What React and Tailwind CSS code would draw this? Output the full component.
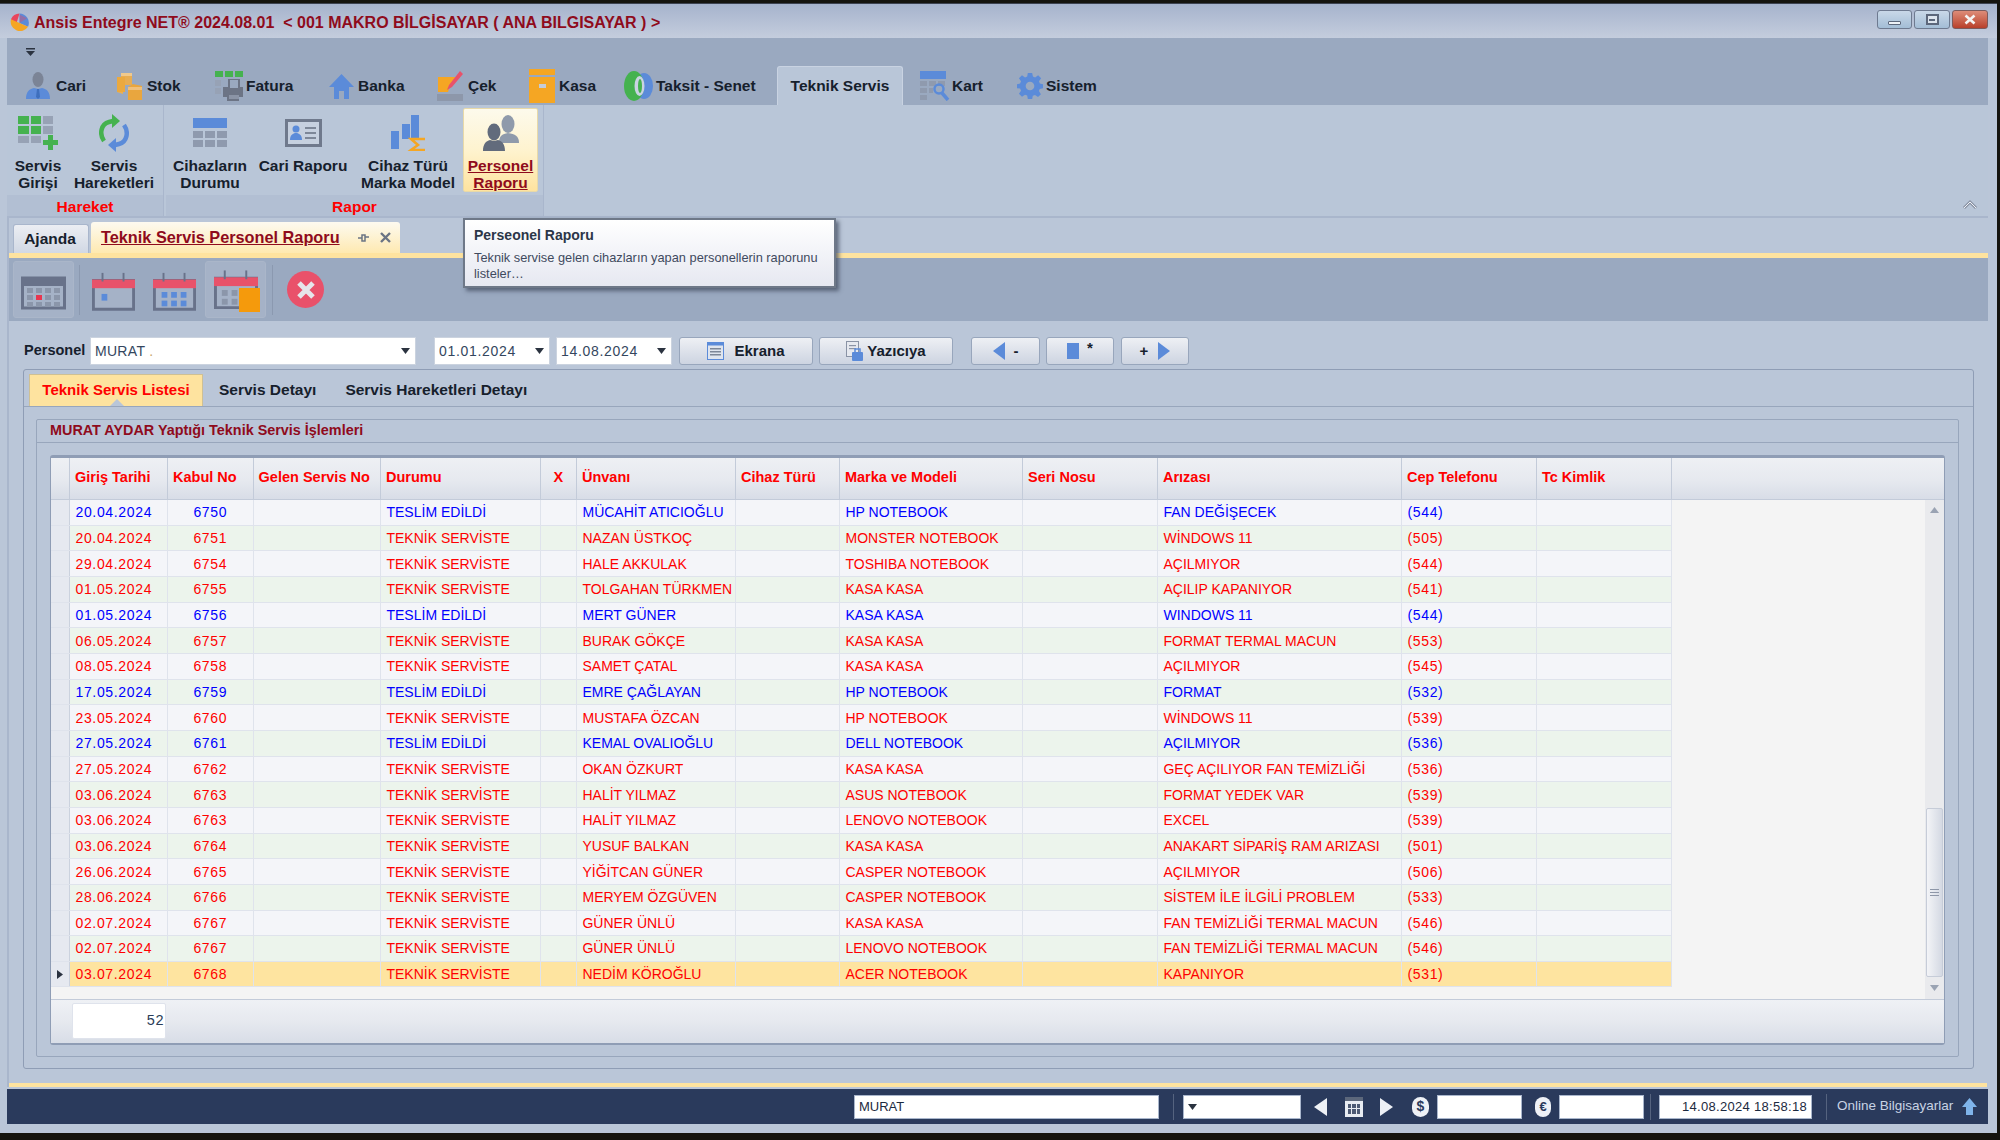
import React from "react";

const COLS = "grid-cols-[19px_98px_85.6px_127.4px_159.6px_36.4px_159px_104px_183px_135px_244px_135px_135px]";
const HEAD_COLS = "grid-cols-[19px_98px_85.6px_127.4px_159.6px_36.4px_159px_104px_183px_135px_244px_135px_135px_1fr]";

const T = "TEKNİK SERVİSTE", E = "TESLİM EDİLDİ";
const rows = [
  ["20.04.2024","6750",E,"MÜCAHİT ATICIOĞLU","HP NOTEBOOK","FAN DEĞİŞECEK","(544)",1],
  ["20.04.2024","6751",T,"NAZAN ÜSTKOÇ","MONSTER NOTEBOOK","WİNDOWS 11","(505)",0],
  ["29.04.2024","6754",T,"HALE AKKULAK","TOSHIBA NOTEBOOK","AÇILMIYOR","(544)",0],
  ["01.05.2024","6755",T,"TOLGAHAN TÜRKMEN","KASA KASA","AÇILIP KAPANIYOR","(541)",0],
  ["01.05.2024","6756",E,"MERT GÜNER","KASA KASA","WINDOWS 11","(544)",1],
  ["06.05.2024","6757",T,"BURAK GÖKÇE","KASA KASA","FORMAT TERMAL MACUN","(553)",0],
  ["08.05.2024","6758",T,"SAMET ÇATAL","KASA KASA","AÇILMIYOR","(545)",0],
  ["17.05.2024","6759",E,"EMRE ÇAĞLAYAN","HP NOTEBOOK","FORMAT","(532)",1],
  ["23.05.2024","6760",T,"MUSTAFA ÖZCAN","HP NOTEBOOK","WİNDOWS 11","(539)",0],
  ["27.05.2024","6761",E,"KEMAL OVALIOĞLU","DELL NOTEBOOK","AÇILMIYOR","(536)",1],
  ["27.05.2024","6762",T,"OKAN ÖZKURT","KASA KASA","GEÇ AÇILIYOR FAN TEMİZLİĞİ","(536)",0],
  ["03.06.2024","6763",T,"HALİT YILMAZ","ASUS NOTEBOOK","FORMAT YEDEK VAR","(539)",0],
  ["03.06.2024","6763",T,"HALİT YILMAZ","LENOVO NOTEBOOK","EXCEL","(539)",0],
  ["03.06.2024","6764",T,"YUSUF BALKAN","KASA KASA","ANAKART SİPARİŞ RAM ARIZASI","(501)",0],
  ["26.06.2024","6765",T,"YİĞİTCAN GÜNER","CASPER NOTEBOOK","AÇILMIYOR","(506)",0],
  ["28.06.2024","6766",T,"MERYEM ÖZGÜVEN","CASPER NOTEBOOK","SİSTEM İLE İLGİLİ PROBLEM","(533)",0],
  ["02.07.2024","6767",T,"GÜNER ÜNLÜ","KASA KASA","FAN TEMİZLİĞİ TERMAL MACUN","(546)",0],
  ["02.07.2024","6767",T,"GÜNER ÜNLÜ","LENOVO NOTEBOOK","FAN TEMİZLİĞİ TERMAL MACUN","(546)",0],
  ["03.07.2024","6768",T,"NEDİM KÖROĞLU","ACER NOTEBOOK","KAPANIYOR","(531)",0],
];

const BLUE = "#5b8bd9", GREEN = "#45b24f", ORANGE = "#f5a623";

const Cari = () => (
  <svg width="24" height="27" viewBox="0 0 24 27"><ellipse cx="12" cy="7.5" rx="5.5" ry="7.5" fill="#7b8496" /><path d="M0 27c0-7 3-10 8-11l4 1 4-1c5 1 8 4 8 11z" fill={BLUE} /><path d="M11 17h2l1 8-2 2-2-2z" fill="#3e6fbd" /></svg>
);
const Stok = () => (
  <svg width="27" height="28" viewBox="0 0 27 28"><path d="M1 8l6-2v16l-6-2z" fill="#eeb04e" /><rect x="5" y="1" width="11" height="12" fill="#e8ad52" /><rect x="5" y="1" width="11" height="3" fill="#f0c98c" /><path d="M12 15l5-3 9 2v14H12z" fill="#e9a63e" /><path d="M12 15h14v3H12z" fill="#f0c07a" /><rect x="1" y="5" width="8" height="15" fill="#eba93f" /></svg>
);
const Fatura = () => (
  <svg width="30" height="30" viewBox="0 0 30 30">
    <rect x="0" y="0" width="8" height="6" fill={GREEN} /><rect x="10" y="0" width="8" height="6" fill={GREEN} /><rect x="20" y="0" width="8" height="6" fill={GREEN} />
    <rect x="0" y="9" width="6" height="6" fill="#97a2b5" /><rect x="0" y="17" width="6" height="6" fill="#97a2b5" /><rect x="8" y="17" width="5" height="6" fill="#97a2b5" />
    <path d="M13 8h12v8h3v10h-4v4H12v-4H8V16h5z" fill="#6c7485" /><rect x="15" y="9" width="8" height="8" fill="#9aa9c0" /><rect x="14" y="24" width="10" height="4" fill="#8b94a6" />
  </svg>
);
const Banka = () => (
  <svg width="25" height="26" viewBox="0 0 25 26"><path d="M12.5 1L25 14h-5v12h-5v-8h-5v8H5V14H0z" fill={BLUE} /></svg>
);
const Cek = () => (
  <svg width="27" height="30" viewBox="0 0 27 30"><path d="M1 6h18l-7 12-1 3H1z" fill={ORANGE} /><path d="M23 0l3 3-11 13-5 3 2-5z" fill="#e8526a" /><rect x="0" y="23" width="26" height="7" fill="#8d97aa" /></svg>
);
const Kasa = () => (
  <svg width="26" height="34" viewBox="0 0 26 34"><rect x="0" y="0" width="26" height="6" fill={ORANGE} /><rect x="0" y="8" width="26" height="26" fill={ORANGE} /><rect x="10" y="15" width="7" height="4" fill="#c5ccd8" /></svg>
);
const Taksit = () => (
  <svg width="29" height="30" viewBox="0 0 29 30"><ellipse cx="20" cy="15" rx="9" ry="13" fill={BLUE} /><ellipse cx="10" cy="15" rx="10" ry="15" fill={GREEN} /><ellipse cx="15.500" cy="15" rx="5" ry="10" fill="#c9d3e2" /><ellipse cx="16" cy="15" rx="2" ry="7" fill={GREEN} /></svg>
);
const Kart = () => (
  <svg width="30" height="30" viewBox="0 0 30 30"><rect x="0" y="0" width="26" height="8" fill={BLUE} /><g fill="#8f9aae"><rect x="0" y="10" width="7" height="5" /><rect x="9" y="10" width="7" height="5" /><rect x="18" y="10" width="7" height="5" /><rect x="0" y="17" width="7" height="5" /><rect x="9" y="17" width="4" height="5" /><rect x="0" y="24" width="7" height="5" /></g><circle cx="19" cy="18" r="4.500" fill="none" stroke={BLUE} strokeWidth="2.500" /><path d="M22 22l6 7" stroke={BLUE} strokeWidth="3.500" /></svg>
);
const Sistem = () => (
  <svg width="26" height="28" viewBox="0 0 24 24" fill={BLUE}><path fillRule="evenodd" d="M10 0h4l.7 3.3 2 .8L19.5 2 22.300 4.800l-2 2.900.8 1.900L24 10.300v3.700l-3 .7-.8 2 1.900 2.800-2.700 2.700-2.800-1.900-2 .8L14 24h-4l-.6-3.200-2-.8-2.800 1.900-2.800-2.700 1.900-2.800-.8-2L0 14v-3.700l2.900-.7.800-1.900-1.900-2.900L4.600 2l2.800 2.100 2-.8zM12 8a4 4 0 100 8 4 4 0 000-8z" /></svg>
);

const ribbonTabs = [
  { w: "w-[90px]", c: <Cari />, t: "Cari", g: "gap-[6px]" },
  { w: "w-[99px]", c: <Stok />, t: "Stok", g: "gap-[4px]" },
  { w: "w-[114px]", c: <Fatura />, t: "Fatura", g: "gap-[1px]" },
  { w: "w-[108px]", c: <Banka />, t: "Banka", g: "gap-[4px]" },
  { w: "w-[92px]", c: <Cek />, t: "Çek", g: "gap-[4px]" },
  { w: "w-[95px]", c: <Kasa />, t: "Kasa", g: "gap-[4px]" },
  { w: "w-[153px]", c: <Taksit />, t: "Taksit - Senet", g: "gap-[3px]" },
];

const ServisGirisi = () => (
  <svg width="40" height="34" viewBox="0 0 40 34">
    <g fill={GREEN}><rect x="0" y="0" width="11" height="8" /><rect x="13" y="0" width="10" height="8" /><rect x="0" y="10" width="11" height="8" /><rect x="13" y="10" width="10" height="8" /></g>
    <g fill="#97a2b5"><rect x="25" y="0" width="10" height="8" /><rect x="25" y="10" width="10" height="8" /><rect x="0" y="20" width="11" height="7" /><rect x="13" y="20" width="10" height="7" /></g>
    <path d="M30 19h5v5h5v5h-5v5h-5v-5h-5v-5h5z" fill={GREEN} />
  </svg>
);
const ServisHareket = () => (
  <svg width="30" height="38" viewBox="0 0 30 38">
    <path d="M5 27C0 20 2 10 10 8l4-1" fill="none" stroke={GREEN} strokeWidth="4.500" />
    <path d="M13 0l8 7-8 7z" fill={GREEN} />
    <path d="M25 11c5 7 3 17-5 19l-4 1" fill="none" stroke={BLUE} strokeWidth="4.500" />
    <path d="M17 38l-8-7 8-7z" fill={BLUE} />
  </svg>
);
const Durumu = () => (
  <svg width="34" height="30" viewBox="0 0 34 30">
    <rect x="0" y="0" width="34" height="10" fill={BLUE} />
    <g fill="#8f9aae"><rect x="0" y="13" width="10" height="7" /><rect x="12" y="13" width="10" height="7" /><rect x="24" y="13" width="10" height="7" /><rect x="0" y="22" width="10" height="7" /><rect x="12" y="22" width="10" height="7" /><rect x="24" y="22" width="10" height="7" /></g>
  </svg>
);
const CariRapor = () => (
  <svg width="37" height="28" viewBox="0 0 37 28">
    <rect x="1.500" y="1.500" width="34" height="25" fill="#c6d0df" stroke="#6f798c" strokeWidth="3" />
    <circle cx="11" cy="10" r="3.500" fill={BLUE} /><path d="M5 21c0-5 3-7 6-7s6 2 6 7z" fill={BLUE} />
    <g fill="#7d8798"><rect x="20" y="8" width="11" height="2" /><rect x="20" y="13" width="11" height="2" /><rect x="20" y="18" width="11" height="2" /></g>
  </svg>
);
const CihazTuru = () => (
  <svg width="35" height="36" viewBox="0 0 35 36">
    <rect x="0" y="16" width="8" height="18" fill={BLUE} /><rect x="11" y="9" width="8" height="15" fill={BLUE} /><rect x="20" y="0" width="8" height="24" fill={BLUE} />
    <path d="M34 24H20l7 6-7 5h14" fill="none" stroke={ORANGE} strokeWidth="2.500" />
  </svg>
);
const Persons = () => (
  <svg width="36" height="36" viewBox="0 0 36 36">
    <ellipse cx="25" cy="9" rx="6.500" ry="9" fill="#8f9aab" /><path d="M16 28c0-7 3-9 9-10 7 1 11 3 11 10z" fill="#8f9aab" />
    <ellipse cx="11" cy="17" rx="6.500" ry="8.500" fill="#626b7c" /><path d="M0 36c0-7 3-10 7-11l4 1 4-1c4 1 7 4 7 11z" fill="#626b7c" />
  </svg>
);

const RibbonBtn = ({ w, ml, icon, l1, l2, active }) => (
  <div className={`${w} ${ml} h-[84px] mt-[3px] flex flex-col items-center shrink-0 rounded-[2px] ${active ? "bg-gradient-to-b from-[#fdfaec] via-[#fef3cf] to-[#fee39f] border border-[#e8d9a8]" : ""}`}>
    <div className="h-[46px] pt-[3px] flex items-center justify-center">{icon}</div>
    <div className="mt-[3px] text-center text-[15.500px] leading-[17px] font-bold whitespace-nowrap">
      <div className={active ? "text-[#8f0b1c] underline" : "text-[#16202c]"}>{l1}</div>
      {l2 && <div className={active ? "text-[#8f0b1c] underline" : "text-[#16202c]"}>{l2}</div>}
    </div>
  </div>
);

const Group = ({ w, label, children }) => (
  <div className={`${w} flex flex-col h-full border-r border-[#a9b6cc] shrink-0`}>
    <div className="flex h-[90px]">{children}</div>
    <div className="h-[21px] pt-[2px] bg-[#b2bfd3] text-center text-[15.500px] leading-[19px] font-bold text-[#ff0000]">{label}</div>
  </div>
);

const Cal = ({ w, h, red, children }) => (
  <svg width={w} height={h} viewBox="0 0 45 40">
    <path d="M1.500 8h42v30h-42z" fill="#a5b2c7" stroke="#68728a" strokeWidth="3" />
    <rect x="0" y="7" width="45" height="9" fill={red ? "#e8526a" : "#68728a"} />
    {red && <><rect x="10" y="0" width="2" height="9" fill="#68728a" /><rect x="32" y="0" width="2" height="9" fill="#68728a" /></>}
    {children}
  </svg>
);

const Grid4 = () => {
  const cells = [];
  for (let r = 0; r < 3; r++) for (let c = 0; c < 4; c++) {
    cells.push(<rect key={`${r}${c}`} x={6 + c * 9} y={18 + r * 7} width="6" height="5" fill={r === 1 && c === 1 ? "#e8364f" : "#8b96aa"} />);
  }
  return <>{cells}</>;
};

const Arrow = ({ c = "text-[#2b3340]" }) => (
  <svg width="9" height="6" viewBox="0 0 9 6" className={c}><path d="M0 0h9L4.500 6z" fill="currentColor" /></svg>
);

const Btn = ({ w, ml, children }) => (
  <div className={`${w} ${ml} h-[28px] flex items-center justify-center rounded-[3px] border border-[#98a6bc] bg-gradient-to-b from-[#eef0f4] to-[#cdd4e1] font-bold text-[15px] text-[#16202c]`}>{children}</div>
);

const Input = ({ w, ml, children, cls = "" }) => (
  <div className={`${w} ${ml} h-[28px] bg-white border border-[#cbd3df] flex items-center justify-between pl-[4px] pr-[5px] text-[14px] text-[#34465e] ${cls}`}>{children}</div>
);

const StatusInput = ({ w, ml, right, children }) => (
  <div className={`${w} ${ml} h-[24px] bg-white border border-[#a9b6cc] flex items-center text-[13px] text-[#1c2a40] px-[4px] ${right ? "justify-end tracking-[0.3px]" : ""}`}>{children}</div>
);

const Cell = ({ children, center, mono, color }) => (
  <div className={`h-full border-r border-[#dfe3ec] flex items-center overflow-hidden whitespace-nowrap ${center ? "justify-center" : "pl-[5.500px]"} ${mono ? "tracking-[0.65px]" : ""} ${color}`}>{children}</div>
);

const HeadCell = ({ children, center }) => (
  <div className={`h-full border-r border-[#c3cbd9] flex items-center whitespace-nowrap pb-[2px] text-[14.500px] font-bold text-[#ff0000] ${center ? "justify-center" : "pl-[5px]"}`}>{children}</div>
);

export default function App() {
  return (
    <div className="w-[2000px] h-[1140px] bg-[#15140f] overflow-hidden pt-[3px] font-['Liberation_Sans',Arial,sans-serif]">
      <div className="w-[1997px] h-[1130px] bg-[#bac6d8] border-t border-[#3c4250] relative flex flex-col">
        {/* Title bar */}
        <div className="h-[34px] shrink-0 bg-gradient-to-b from-[#a6b3cc] to-[#c4cddd] flex items-center pl-[10px] pt-[3px]">
          <svg width="19" height="20" viewBox="0 0 20 20" className="shrink-0">
            <path d="M10 0a10 10 0 00-9 6l5 7z" fill="#e9455c" />
            <path d="M10 0a10 10 0 019 14l-9-4z" fill="#5b8bd9" />
            <path d="M1 6a10 10 0 0018 8l-9-4z" fill="#f5a623" />
            <path d="M10 1l8 4-8 5z" fill="#e9455c" opacity="0.4" />
          </svg>
          <span className="ml-[5px] text-[16px] font-bold text-[#8f0b1c] whitespace-pre">{"Ansis Entegre NET® 2024.08.01  < 001 MAKRO BİLGİSAYAR ( ANA BILGISAYAR ) >"}</span>
          <div className="ml-auto mr-[9px] flex gap-[2px] mt-[-6px]">
            <div className="w-[35px] h-[19px] rounded-[3px] border border-[#6e7a90] bg-gradient-to-b from-[#c9d8e8] to-[#a3bdd6] flex items-end justify-center pb-[3px]"><div className="w-[13px] h-[4px] bg-[#eef2f7] border border-[#5c677b] rounded-[1px]" /></div>
            <div className="w-[36px] h-[19px] rounded-[3px] border border-[#6e7a90] bg-gradient-to-b from-[#c9d8e8] to-[#a3bdd6] flex items-center justify-center"><div className="w-[13px] h-[11px] bg-[#dde5ee] border-2 border-[#5c677b] flex items-center justify-center"><div className="w-[6px] h-[2px] bg-[#5c677b]" /></div></div>
            <div className="w-[36px] h-[19px] rounded-[3px] border border-[#7c5b5c] bg-gradient-to-b from-[#dd8c78] to-[#b83f2a] flex items-center justify-center">
              <svg width="12" height="11" viewBox="0 0 12 11"><path d="M1.500 1.500l9 8M10.500 1.500l-9 8" stroke="#f4f4f4" strokeWidth="2.600" /></svg>
            </div>
          </div>
        </div>

        {/* Main column */}
        <div className="flex-1 ml-[7px] mr-[9px] flex flex-col min-h-0">
          {/* Ribbon tab strip */}
          <div className="h-[67px] shrink-0 bg-[#9aa9c0] flex flex-col">
            <div className="h-[28px] pl-[19px] pt-[10px]"><svg width="9" height="8" viewBox="0 0 9 8"><rect x="0" y="0" width="9" height="1.500" fill="#2b3340" /><path d="M0 3h9L4.500 8z" fill="#2b3340" /></svg></div>
            <div className="flex h-[39px] pl-[19px] text-[15.500px] font-bold text-[#16202c] whitespace-nowrap">
              {ribbonTabs.map((t) => (
                <div key={t.t} className={`${t.w} flex items-center shrink-0 ${t.g}`}>{t.c}<span>{t.t}</span></div>
              ))}
              <div className="w-[126px] h-[39px] shrink-0 bg-[#b9c6d8] rounded-t-[3px] border-t border-x border-[#c9d3e2] flex items-center justify-center">Teknik Servis</div>
              <div className="w-[97px] ml-[17px] flex items-center shrink-0 gap-[2px]"><Kart /><span>Kart</span></div>
              <div className="flex items-center gap-[3px]"><Sistem /><span>Sistem</span></div>
            </div>
          </div>

          {/* Ribbon panel */}
          <div className="h-[113px] shrink-0 bg-[#b9c6d8] flex border-b-2 border-[#a9b6cc]">
            <Group w="w-[157px]" label="Hareket">
              <RibbonBtn w="w-[58px]" ml="ml-[2px]" icon={<ServisGirisi />} l1="Servis" l2="Girişi" />
              <RibbonBtn w="w-[94px]" ml="" icon={<ServisHareket />} l1="Servis" l2="Hareketleri" />
            </Group>
            <Group w="w-[378px] ml-[2px]" label="Rapor">
              <RibbonBtn w="w-[78px]" ml="ml-[5px]" icon={<Durumu />} l1="Cihazların" l2="Durumu" />
              <RibbonBtn w="w-[88px]" ml="ml-[10px]" icon={<CariRapor />} l1="Cari Raporu" />
              <RibbonBtn w="w-[104px]" ml="ml-[9px]" icon={<CihazTuru />} l1="Cihaz Türü" l2="Marka Model" />
              <RibbonBtn w="w-[75px]" ml="ml-[3px]" icon={<Persons />} l1="Personel" l2="Raporu" active />
            </Group>
            <div className="flex-1 flex justify-end items-end pr-[10px] pb-[5px]">
              <svg width="16" height="12" viewBox="0 0 16 12"><path d="M2 9l6-6 6 6" fill="none" stroke="#8a93a5" strokeWidth="3" /><path d="M2 9l6-6 6 6" fill="none" stroke="#eef1f6" strokeWidth="1" /></svg>
            </div>
          </div>

          {/* Document area */}
          <div className="flex-1 min-h-0 flex flex-col border-l-2 border-[#a9b6cc]">
            <div className="h-[35px] shrink-0 flex items-end pl-[4px] gap-[2px]">
              <div className="w-[76px] h-[29px] rounded-t-[3px] border border-b-0 border-[#a9b6cc] bg-gradient-to-b from-[#eceef3] to-[#d1d8e4] flex items-center justify-center text-[15.500px] font-bold text-[#16202c] pr-[2px]">Ajanda</div>
              <div className="w-[309px] h-[31px] rounded-t-[3px] bg-gradient-to-b from-[#fdfaf0] to-[#fee9b0] flex items-center pl-[10px] text-[16.300px] font-bold text-[#8f0b1c] whitespace-nowrap">
                <span className="underline">Teknik Servis Personel Raporu</span>
                <svg width="11" height="10" viewBox="0 0 11 10" className="ml-[18px]"><path d="M0 5h4M4 2h3v6H4zM7 4h4" fill="none" stroke="#6b7484" strokeWidth="1.500" /></svg>
                <svg width="11" height="11" viewBox="0 0 11 11" className="ml-[11px]"><path d="M1 1l9 9M10 1l-9 9" stroke="#6b7484" strokeWidth="2.400" /></svg>
              </div>
            </div>
            <div className="h-[5px] shrink-0 bg-[#fee39f]" />
            {/* Toolbar */}
            <div className="h-[63px] shrink-0 bg-[#9aa9c0] flex items-center pl-[4px]">
              <div className="w-[61px] h-[57px] rounded-[3px] border border-[#aab6c9] bg-[#a5b2c7] flex items-center justify-center"><Cal w={45} h={40}><Grid4 /></Cal></div>
              <div className="w-px h-[50px] bg-[#8b99b0] ml-[5px]" />
              <div className="ml-[12px] mt-[4px]"><Cal w={43} h={42} red><rect x="10" y="22" width="6" height="7" fill="#5b8bd9" /></Cal></div>
              <div className="ml-[18px] mt-[4px]"><Cal w={43} h={42} red><g fill="#5b8bd9"><rect x="9" y="20" width="6" height="6" /><rect x="19" y="20" width="6" height="6" /><rect x="29" y="20" width="6" height="6" /><rect x="9" y="29" width="6" height="6" /><rect x="19" y="29" width="6" height="6" /><rect x="29" y="29" width="6" height="6" /></g></Cal></div>
              <div className="ml-[9px] w-[61px] h-[57px] rounded-[3px] border border-[#aab6c9] bg-[#a5b2c7] flex items-center justify-center relative">
                <Cal w={44} h={44} red><g fill="#8b96aa"><rect x="8" y="20" width="6" height="6" /><rect x="18" y="20" width="6" height="6" /><rect x="28" y="20" width="6" height="6" /><rect x="8" y="29" width="6" height="6" /><rect x="18" y="29" width="6" height="6" /></g></Cal>
                <div className="absolute right-[5px] bottom-[5px] w-[21px] h-[24px] bg-[#f59a0c]" />
              </div>
              <div className="w-px h-[50px] bg-[#8b99b0] ml-[6px]" />
              <div className="ml-[14px] w-[37px] h-[37px] rounded-full bg-[#e9516a] flex items-center justify-center">
                <svg width="22" height="22" viewBox="0 0 22 22"><path d="M4 4l14 14M18 4L4 18" stroke="#e6e6ea" strokeWidth="5" /></svg>
              </div>
            </div>

            {/* Content */}
            <div className="flex-1 min-h-0 flex flex-col">
              <div className="h-[48px] shrink-0 pt-[16px] pl-[15px] flex items-start">
                <div className="w-[66px] h-[28px] flex items-center text-[14.500px] font-bold text-[#16202c]">Personel</div>
                <Input w="w-[326px]" ml="" cls="tracking-[0.3px]"><span>MURAT <span className="text-[#c9a46a]">.</span></span><Arrow /></Input>
                <Input w="w-[116px]" ml="ml-[18px]" cls="tracking-[0.7px]"><span>01.01.2024</span><Arrow /></Input>
                <Input w="w-[116px]" ml="ml-[6px]" cls="tracking-[0.7px]"><span>14.08.2024</span><Arrow /></Input>
                <Btn w="w-[134px]" ml="ml-[7px]">
                  <svg width="17" height="18" viewBox="0 0 17 18" className="mr-[10px]"><rect x="0.500" y="0.500" width="16" height="17" fill="#dfe5ee" stroke="#5b8bd9" /><rect x="0.500" y="0.500" width="16" height="3" fill="#5b8bd9" /><g fill="#7d8798"><rect x="3" y="6" width="11" height="1.500" /><rect x="3" y="9" width="11" height="1.500" /><rect x="3" y="12" width="11" height="1.500" /></g></svg>
                  Ekrana
                </Btn>
                <Btn w="w-[134px]" ml="ml-[6px]">
                  <svg width="17" height="20" viewBox="0 0 17 20" className="mr-[4px]"><rect x="0.500" y="0.500" width="12" height="15" fill="#e6e9ef" stroke="#8a93a5" /><g fill="#8a93a5"><rect x="3" y="4" width="7" height="1.200" /><rect x="3" y="7" width="7" height="1.200" /></g><rect x="6" y="11" width="11" height="9" rx="1" fill="#5b8bd9" /><rect x="9" y="8" width="5" height="4" fill="none" stroke="#5b8bd9" strokeWidth="1.500" /></svg>
                  Yazıcıya
                </Btn>
                <Btn w="w-[69px]" ml="ml-[18px]"><svg width="12" height="18" viewBox="0 0 12 18" className="mr-[9px]"><path d="M12 0v18L0 9z" fill="#5b8bd9" /></svg>-</Btn>
                <Btn w="w-[68px]" ml="ml-[6px]"><div className="w-[12px] h-[16px] bg-[#5b8bd9] mr-[8px]" /><span className="mb-[5px]">*</span></Btn>
                <Btn w="w-[68px]" ml="ml-[7px]">+<svg width="12" height="18" viewBox="0 0 12 18" className="ml-[10px]"><path d="M0 0v18l12-9z" fill="#5b8bd9" /></svg></Btn>
              </div>

              {/* Tab panel */}
              <div className="h-[700px] shrink-0 ml-[14px] mr-[14px] rounded-[3px] border border-[#8f9db5] flex flex-col">
                <div className="h-[37px] shrink-0 flex items-end pl-[5px] border-b border-[#98a6bc] text-[15.500px] font-bold text-[#16202c] whitespace-nowrap">
                  <div className="w-[174px] h-[32px] relative bg-[#fee39f] border border-b-0 border-[#cfc094] flex items-center justify-center text-[15px] text-[#ff0000]">
                    Teknik Servis Listesi
                    <div className="absolute left-[80px] bottom-0 w-0 h-0 border-x-[7px] border-x-transparent border-b-[7px] border-b-[#b9c6d8]" />
                  </div>
                  <div className="h-[32px] flex items-center ml-[16px]">Servis Detayı</div>
                  <div className="h-[32px] flex items-center ml-[29px]">Servis Hareketleri Detayı</div>
                </div>
                {/* Group panel */}
                <div className="mt-[12px] ml-[12px] mr-[14px] h-[638px] rounded-[2px] border border-[#98a6bc] flex flex-col">
                  <div className="h-[23px] shrink-0 border-b border-[#98a6bc] flex items-center pl-[13px] text-[14.400px] font-bold text-[#8f0b1c]">MURAT AYDAR Yaptığı Teknik Servis İşlemleri</div>
                  {/* Data grid */}
                  <div className="mt-[12px] mx-[13px] h-[590px] rounded-[3px] border-x border-b-2 border-t-[3px] border-[#8f9db5] flex flex-col bg-[#f4f4f4]">
                    <div className={`h-[42px] shrink-0 grid ${HEAD_COLS} bg-gradient-to-b from-[#eef0f4] via-[#e6e9ef] via-55% to-[#d8dde7] border-b border-[#c3cbd9]`}>
                      <HeadCell />
                      <HeadCell>Giriş Tarihi</HeadCell>
                      <HeadCell>Kabul No</HeadCell>
                      <HeadCell>Gelen Servis No</HeadCell>
                      <HeadCell>Durumu</HeadCell>
                      <HeadCell center>X</HeadCell>
                      <HeadCell>Ünvanı</HeadCell>
                      <HeadCell>Cihaz Türü</HeadCell>
                      <HeadCell>Marka ve Modeli</HeadCell>
                      <HeadCell>Seri Nosu</HeadCell>
                      <HeadCell>Arızası</HeadCell>
                      <HeadCell>Cep Telefonu</HeadCell>
                      <HeadCell>Tc Kimlik</HeadCell>
                      <div />
                    </div>
                    <div className="h-[499px] shrink-0 flex">
                      <div className="flex-1 min-w-0">
                        {rows.map((r, i) => {
                          const sel = i === rows.length - 1;
                          const bg = sel ? "bg-[#fee4a0]" : i % 2 === 0 ? "bg-[#f4f5f9]" : "bg-[#ecf4ec]";
                          const c = r[7] ? "text-[#0000ff]" : "text-[#ff0000]";
                          return (
                            <div key={i} className={`h-[25.670px] grid ${COLS} w-[1621px] ${bg} border-b border-[#dfe3ec] text-[14px] leading-none`}>
                              <div className="h-full bg-[#e6e9f0] border-r border-[#cbd2de] flex items-center justify-center">
                                {sel && <svg width="6" height="9" viewBox="0 0 6 9"><path d="M0 0v9l6-4.500z" fill="#2b3340" /></svg>}
                              </div>
                              <Cell mono color={c}>{r[0]}</Cell>
                              <Cell mono center color={c}>{r[1]}</Cell>
                              <Cell color={c} />
                              <Cell color={c}>{r[2]}</Cell>
                              <Cell color={c} />
                              <Cell color={c}>{r[3]}</Cell>
                              <Cell color={c} />
                              <Cell color={c}>{r[4]}</Cell>
                              <Cell color={c} />
                              <Cell color={c}>{r[5]}</Cell>
                              <Cell mono color={c}>{r[6]}</Cell>
                              <Cell color={c} />
                            </div>
                          );
                        })}
                      </div>
                      {/* Scrollbar */}
                      <div className="w-[19px] shrink-0 bg-[#e9eaed] flex flex-col items-center">
                        <div className="h-[20px] flex items-center justify-center"><svg width="9" height="6" viewBox="0 0 9 6"><path d="M0 6h9L4.500 0z" fill="#9aa3b3" /></svg></div>
                        <div className="flex-1" />
                        <div className="w-[17px] h-[169px] rounded-[2px] border border-[#c6ccd8] bg-gradient-to-r from-[#f3f4f7] to-[#d4d9e3] flex items-center justify-center">
                          <div className="w-[9px] h-[7px] border-y border-[#8e97a8] flex items-center"><div className="w-full h-px bg-[#8e97a8]" /></div>
                        </div>
                        <div className="h-[22px] flex items-center justify-center"><svg width="9" height="6" viewBox="0 0 9 6"><path d="M0 0h9L4.500 6z" fill="#9aa3b3" /></svg></div>
                      </div>
                    </div>
                    <div className="flex-1 border-t border-[#c3cbd9] bg-gradient-to-b from-[#eff1f5] via-[#e6e9ef] via-50% to-[#d8dde7] pl-[21px] pt-[3px]">
                      <div className="w-[94px] h-[36px] bg-white rounded-[2px] border border-[#dfe3ec] flex items-center justify-end pr-[1px] text-[14.500px] tracking-[0.5px] text-[#2b3d58]">52</div>
                    </div>
                  </div>
                </div>
              </div>

              <div className="h-[14px] shrink-0" />
              <div className="h-[4px] shrink-0 mr-[1px] bg-[#fee39f]" />
            </div>
          </div>

          {/* Status bar */}
          <div className="h-[35px] shrink-0 mt-[2px] bg-[#2a3a5c] flex items-center text-[#c8d3e4]">
            <StatusInput w="w-[305px]" ml="ml-[847px]">MURAT</StatusInput>
            <div className="w-px h-[26px] bg-[#55637f] ml-[14px]" />
            <StatusInput w="w-[118px]" ml="ml-[9px]"><Arrow /></StatusInput>
            <svg width="13" height="18" viewBox="0 0 13 18" className="ml-[13px]"><path d="M13 0v18L0 9z" fill="#eef1f6" /></svg>
            <div className="ml-[18px] w-[18px] h-[20px] bg-[#e8ecf2] border-t-[4px] border-[#5c677b] grid grid-cols-3 gap-[1px] p-[3px]">
              {[0,1,2,3,4,5].map((n) => <div key={n} className="bg-[#4d5a74]" />)}
            </div>
            <svg width="13" height="18" viewBox="0 0 13 18" className="ml-[17px]"><path d="M0 0v18l13-9z" fill="#eef1f6" /></svg>
            <div className="ml-[19px] w-[17px] h-[20px] rounded-full bg-[#eef1f6] text-[#2a3a5c] text-[14px] font-bold flex items-center justify-center">$</div>
            <StatusInput w="w-[85px]" ml="ml-[8px]" />
            <div className="ml-[13px] w-[16px] h-[20px] rounded-full bg-[#eef1f6] text-[#2a3a5c] text-[13px] font-bold flex items-center justify-center">€</div>
            <StatusInput w="w-[85px]" ml="ml-[8px]" />
            <div className="w-px h-[26px] bg-[#55637f] ml-[6px]" />
            <StatusInput w="w-[153px]" ml="ml-[8px]" right>14.08.2024 18:58:18</StatusInput>
            <div className="w-px h-[26px] bg-[#55637f] ml-[14px]" />
            <span className="ml-[10px] text-[13.500px] whitespace-nowrap">Online Bilgisayarlar</span>
            <svg width="15" height="17" viewBox="0 0 15 17" className="ml-[9px]"><path d="M7.500 0L15 9h-4v8H4V9H0z" fill="#7fb4ea" /></svg>
          </div>
          <div className="h-[9px] shrink-0" />
        </div>

        {/* Tooltip over the ribbon */}
        <div className="absolute left-[463px] top-[214px] w-[373px] h-[70px] border-2 border-[#6e7888] bg-gradient-to-b from-white to-[#e6e8f1] shadow-[3px_3px_4px_rgba(60,70,90,0.7)] pl-[9px] pt-[6px] text-[#3f4a5e]">
          <div className="text-[14px] font-bold text-[#2b3648] leading-[18px]">Perseonel Raporu</div>
          <div className="mt-[6px] text-[12.800px] leading-[15.500px] whitespace-nowrap">Teknik servise gelen cihazların yapan personellerin raporunu<br />listeler…</div>
        </div>
      </div>
    </div>
  );
}
